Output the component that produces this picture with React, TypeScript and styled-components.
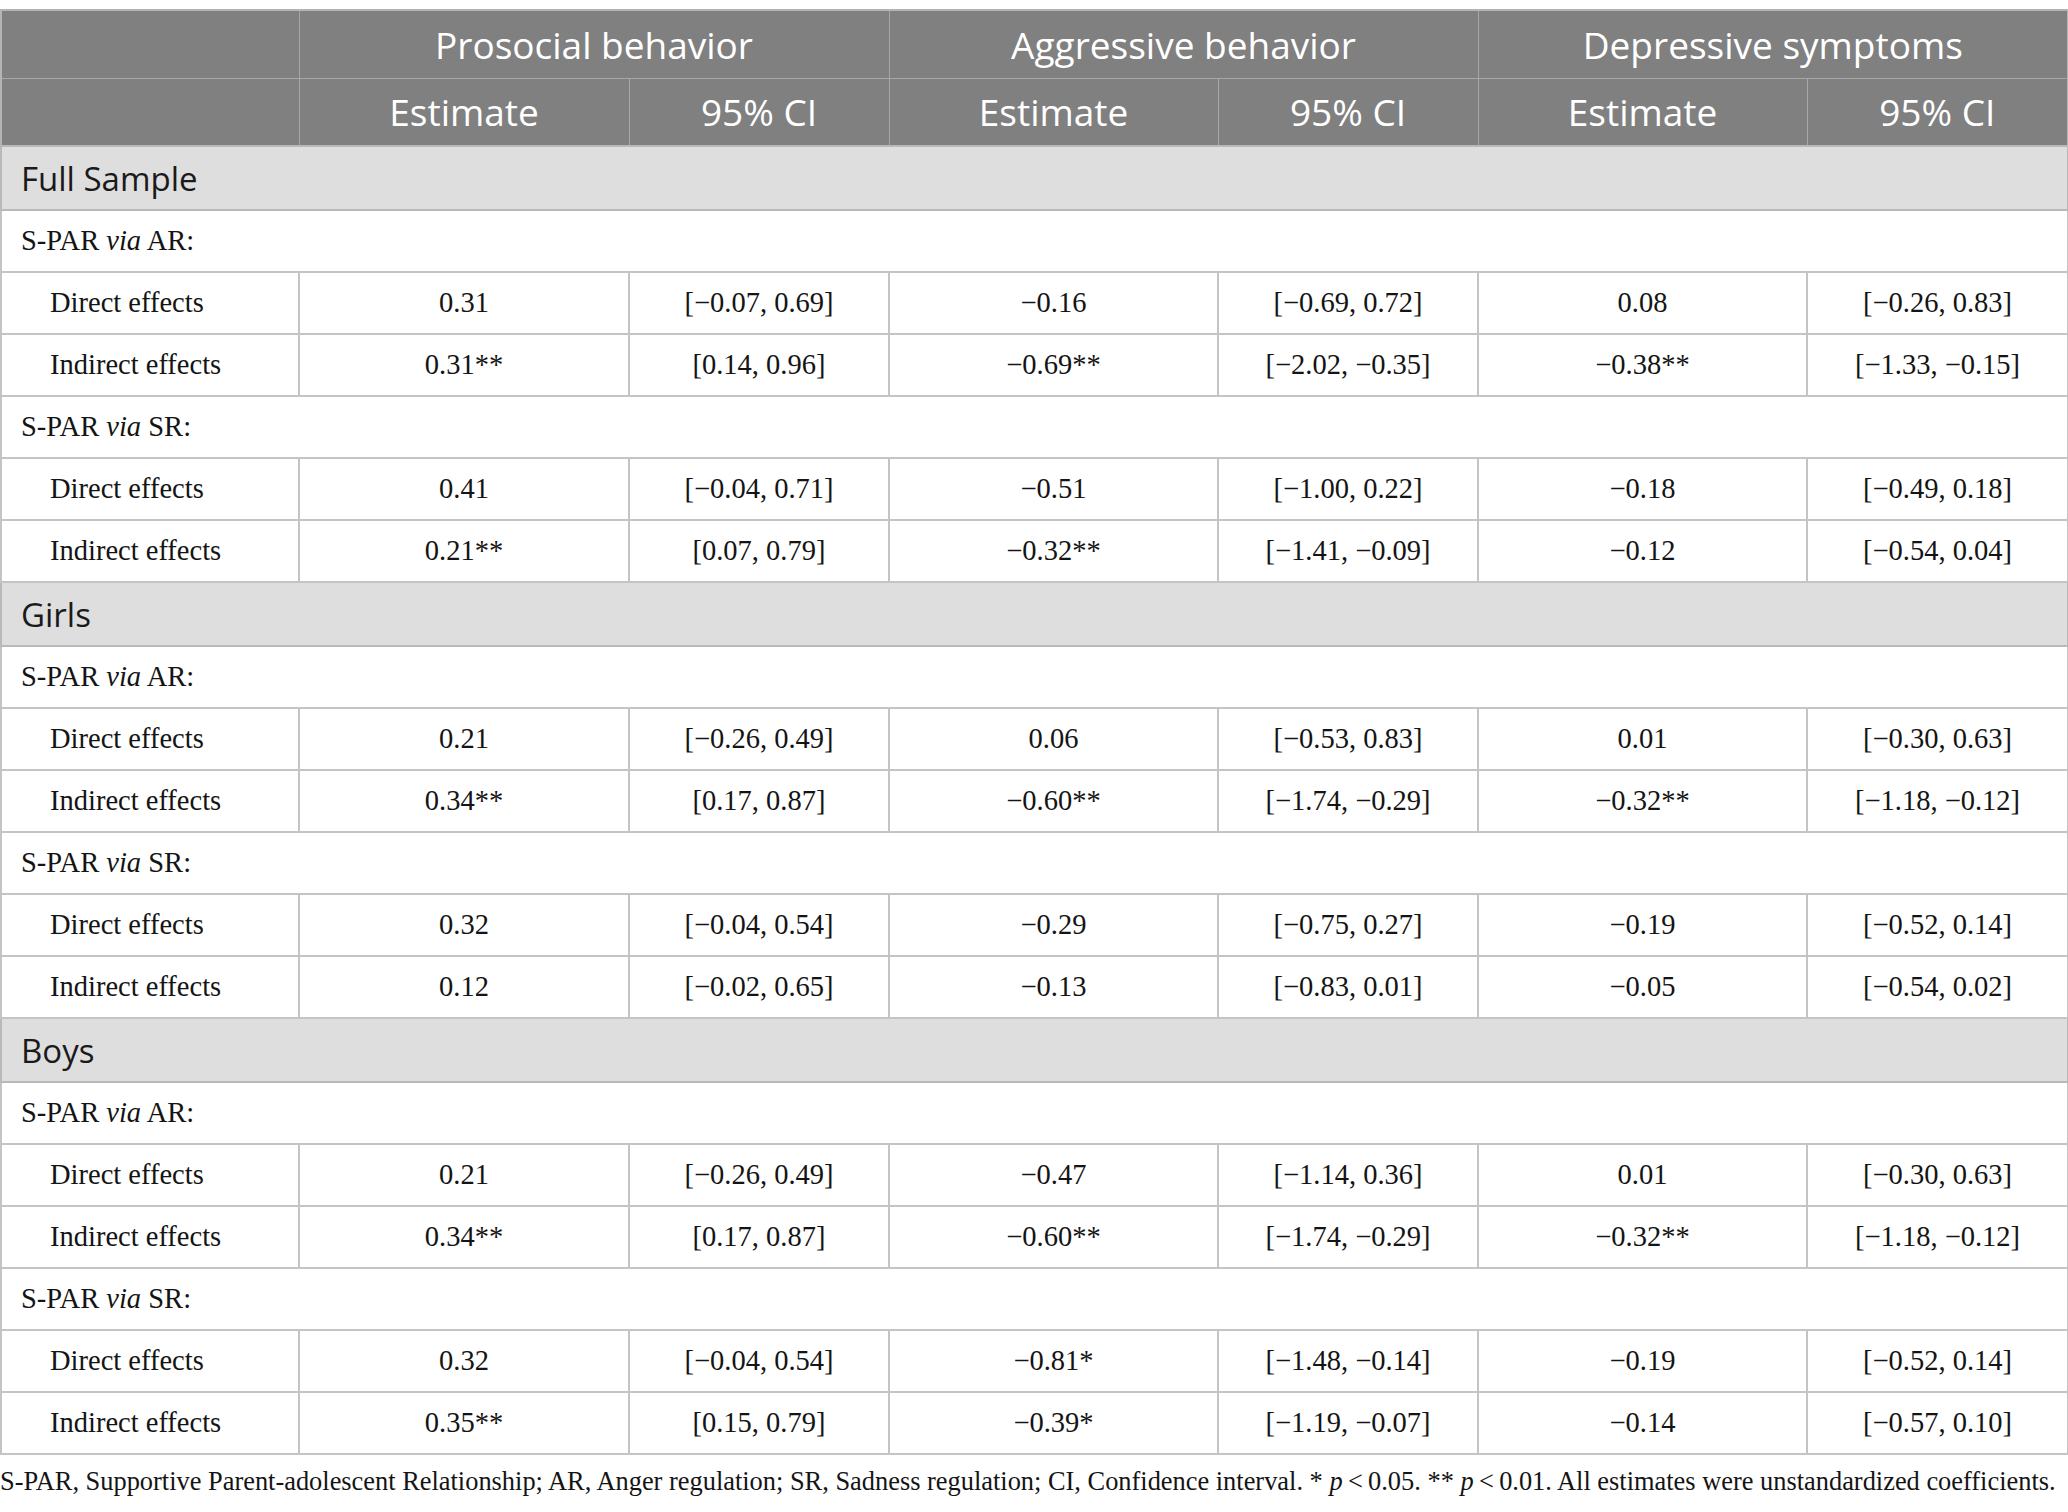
import React from "react";
import styled, { createGlobalStyle } from "styled-components";

//  global
const GlobalStyle = createGlobalStyle`
  html, body {
    margin: 0;
    padding: 0;
    background: #ffffff;
  }
`;

//  data
type Row = { label: string; values: string[] };
type Path = { title: string; rows: Row[] };
type Section = { title: string; paths: Path[] };

const outcomes = ["Prosocial behavior", "Aggressive behavior", "Depressive symptoms"];

const sections: Section[] = [
  {
    title: "Full Sample",
    paths: [
      {
        title: "AR",
        rows: [
          { label: "Direct effects", values: ["0.31", "[−0.07, 0.69]", "−0.16", "[−0.69, 0.72]", "0.08", "[−0.26, 0.83]"] },
          { label: "Indirect effects", values: ["0.31**", "[0.14, 0.96]", "−0.69**", "[−2.02, −0.35]", "−0.38**", "[−1.33, −0.15]"] }
        ]
      },
      {
        title: "SR",
        rows: [
          { label: "Direct effects", values: ["0.41", "[−0.04, 0.71]", "−0.51", "[−1.00, 0.22]", "−0.18", "[−0.49, 0.18]"] },
          { label: "Indirect effects", values: ["0.21**", "[0.07, 0.79]", "−0.32**", "[−1.41, −0.09]", "−0.12", "[−0.54, 0.04]"] }
        ]
      }
    ]
  },
  {
    title: "Girls",
    paths: [
      {
        title: "AR",
        rows: [
          { label: "Direct effects", values: ["0.21", "[−0.26, 0.49]", "0.06", "[−0.53, 0.83]", "0.01", "[−0.30, 0.63]"] },
          { label: "Indirect effects", values: ["0.34**", "[0.17, 0.87]", "−0.60**", "[−1.74, −0.29]", "−0.32**", "[−1.18, −0.12]"] }
        ]
      },
      {
        title: "SR",
        rows: [
          { label: "Direct effects", values: ["0.32", "[−0.04, 0.54]", "−0.29", "[−0.75, 0.27]", "−0.19", "[−0.52, 0.14]"] },
          { label: "Indirect effects", values: ["0.12", "[−0.02, 0.65]", "−0.13", "[−0.83, 0.01]", "−0.05", "[−0.54, 0.02]"] }
        ]
      }
    ]
  },
  {
    title: "Boys",
    paths: [
      {
        title: "AR",
        rows: [
          { label: "Direct effects", values: ["0.21", "[−0.26, 0.49]", "−0.47", "[−1.14, 0.36]", "0.01", "[−0.30, 0.63]"] },
          { label: "Indirect effects", values: ["0.34**", "[0.17, 0.87]", "−0.60**", "[−1.74, −0.29]", "−0.32**", "[−1.18, −0.12]"] }
        ]
      },
      {
        title: "SR",
        rows: [
          { label: "Direct effects", values: ["0.32", "[−0.04, 0.54]", "−0.81*", "[−1.48, −0.14]", "−0.19", "[−0.52, 0.14]"] },
          { label: "Indirect effects", values: ["0.35**", "[0.15, 0.79]", "−0.39*", "[−1.19, −0.07]", "−0.14", "[−0.57, 0.10]"] }
        ]
      }
    ]
  }
];

const colWidths = [298, 330, 260, 329, 260, 329, 261];

//  styled components
const Page = styled.div`
  padding-top: 9px;
  width: 2068px;
`;

const Table = styled.table`
  width: 2067px;
  table-layout: fixed;
  border-collapse: collapse;
  border: 2px solid #b4b4b4;
`;

const HeadRow = styled.tr`
  height: 68px;
  background: #7f807f;
`;

const HeadCell = styled.th`
  padding: 0;
  border: 1.5px solid #a6a7a6;
  color: #ffffff;
  font-family: "Open Sans", "Noto Sans", sans-serif;
  font-weight: 400;
  font-size: 37px;
  text-align: center;
  vertical-align: middle;
  white-space: nowrap;
`;

const SectionRow = styled.tr`
  height: 64px;
  background: #dfdedf;
`;

const SectionCell = styled.td`
  padding: 0 0 0 19px;
  border: 2px solid #b9b9b9;
  color: #1a1a1a;
  font-family: "Open Sans", "Noto Sans", sans-serif;
  font-size: 33px;
  text-align: left;
`;

const BodyRow = styled.tr`
  height: 62px;
  background: #ffffff;
`;

const PathCell = styled.td`
  padding: 0 0 0 19px;
  border: 2px solid #c4c4c4;
  color: #141414;
  font-family: "Liberation Serif", "Times New Roman", serif;
  font-size: 28.5px;
`;

const Cell = styled.td<{ $label?: boolean }>`
  padding: ${({ $label }) => ($label ? "0 0 0 48px" : "0")};
  border: 2px solid #c4c4c4;
  color: #141414;
  font-family: "Liberation Serif", "Times New Roman", serif;
  font-size: 28.5px;
  text-align: ${({ $label }) => ($label ? "left" : "center")};
  white-space: nowrap;
`;

const Note = styled.p`
  margin: 11px 0 0 0;
  color: #141414;
  font-family: "Liberation Serif", "Times New Roman", serif;
  font-size: 26.4px;
  white-space: nowrap;
`;

export default function App() {
  return (
    <Page>
      <GlobalStyle />
      <Table>
        <colgroup>
          {colWidths.map((w, i) => (
            <col key={i} style={{ width: w }} />
          ))}
        </colgroup>
        <thead>
          <HeadRow>
            <HeadCell />
            {outcomes.map(o => (
              <HeadCell key={o} colSpan={2}>
                {o}
              </HeadCell>
            ))}
          </HeadRow>
          <HeadRow>
            <HeadCell />
            {outcomes.map(o => (
              <React.Fragment key={o}>
                <HeadCell>Estimate</HeadCell>
                <HeadCell>95% CI</HeadCell>
              </React.Fragment>
            ))}
          </HeadRow>
        </thead>
        <tbody>
          {sections.map(s => (
            <React.Fragment key={s.title}>
              <SectionRow>
                <SectionCell colSpan={7}>{s.title}</SectionCell>
              </SectionRow>
              {s.paths.map(p => (
                <React.Fragment key={p.title}>
                  <BodyRow>
                    <PathCell colSpan={7}>
                      S-PAR <i>via</i> {p.title}:
                    </PathCell>
                  </BodyRow>
                  {p.rows.map(r => (
                    <BodyRow key={r.label}>
                      <Cell $label>{r.label}</Cell>
                      {r.values.map((v, i) => (
                        <Cell key={i}>{v}</Cell>
                      ))}
                    </BodyRow>
                  ))}
                </React.Fragment>
              ))}
            </React.Fragment>
          ))}
        </tbody>
      </Table>
      <Note>
        S-PAR, Supportive Parent-adolescent Relationship; AR, Anger regulation; SR, Sadness regulation; CI, Confidence
        interval. * <i>p</i>{"\u2009"}&lt;{"\u2009"}0.05. ** <i>p</i>{"\u2009"}&lt;{"\u2009"}0.01. All estimates were
        unstandardized coefficients.
      </Note>
    </Page>
  );
}
